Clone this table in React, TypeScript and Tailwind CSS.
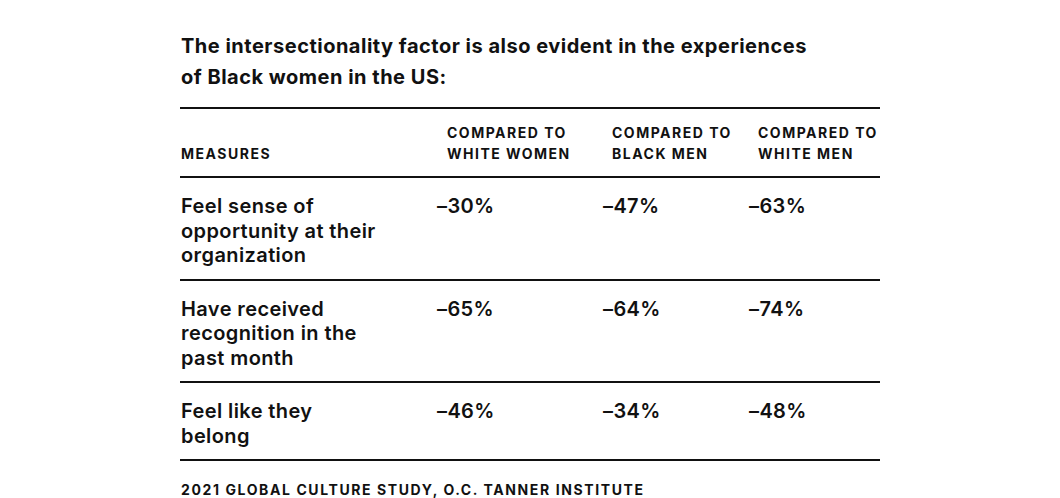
const rows = [
  { label: 'Feel sense of opportunity at their organization', values: ['–30%', '–47%', '–63%'] },
  { label: 'Have received recognition in the past month', values: ['–65%', '–64%', '–74%'] },
  { label: 'Feel like they belong', values: ['–46%', '–34%', '–48%'] },
];

export default function App() {
  return (
    <div className="min-h-screen bg-white text-[#111] font-['Inter',sans-serif]">
      <div className="mx-auto w-[700px] pt-[31px]">
        <h2 className="pl-px text-[20px] font-bold leading-[31px] tracking-[0.5px] w-[650px]">
          The intersectionality factor is also evident in the experiences of Black women in the US:
        </h2>

        <table className="mt-[14px] w-full border-collapse border-t-2 border-[#111]">
          <thead>
            <tr className="border-b-2 border-[#111] text-[14px] font-extrabold uppercase tracking-[1.5px] leading-[21px]">
              <th className="w-[257px] pl-px pt-[13px] pb-[12px] text-left align-bottom">Measures</th>
              <th className="w-[166px] pl-[10px] pt-[13px] pb-[12px] text-left align-bottom">Compared to<br />White Women</th>
              <th className="w-[146px] pl-[9px] pt-[13px] pb-[12px] text-left align-bottom">Compared to<br />Black Men</th>
              <th className="pl-[9px] pt-[13px] pb-[12px] text-left align-bottom">Compared to<br />White Men</th>
            </tr>
          </thead>
          <tbody>
            {rows.map((r) => (
              <tr key={r.label} className="border-b-2 border-[#111] text-[20px] font-semibold leading-[24.5px] tracking-[0.4px]">
                <td className="pl-px pr-[40px] pt-[16px] pb-[11px] align-top">
                  <div className="w-[200px]">{r.label}</div>
                </td>
                {r.values.map((v, i) => (
                  <td key={i} className="pt-[16px] pb-[11px] align-top">{v}</td>
                ))}
              </tr>
            ))}
          </tbody>
        </table>

        <p className="mt-[21px] pl-px text-[14px] font-bold uppercase tracking-[1.6px] leading-[16px]">
          2021 Global Culture Study, O.C. Tanner Institute
        </p>
      </div>
    </div>
  );
}
